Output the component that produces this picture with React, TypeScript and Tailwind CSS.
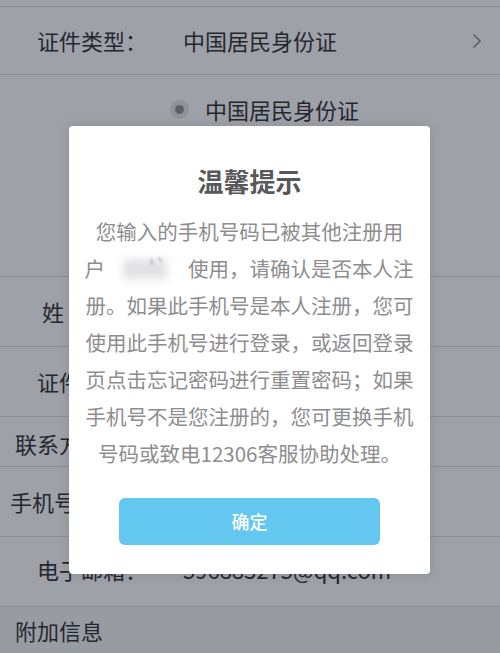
import React from 'react'

const font = { fontFamily: '"Noto Sans CJK SC", "Noto Sans", sans-serif' }

const Row: React.FC<{ className?: string; children?: React.ReactNode }> = ({ className = '', children }) => (
  <div className={`flex items-center bg-white border-b border-[#dcdcdc] ${className}`}>{children}</div>
)

const bodyLines = [
  '您输入的手机号码已被其他注册用',
  null,
  '册。如果此手机号是本人注册，您可',
  '使用此手机号进行登录，或返回登录',
  '页点击忘记密码进行重置密码；如果',
  '手机号不是您注册的，您可更换手机',
  '号码或致电12306客服协助处理。',
]

export default function App() {
  return (
    <div className="relative h-[653px] w-[500px] overflow-hidden bg-white text-[#222]" style={font}>
      {/* form underneath */}
      <div className="flex flex-col">
        <div className="h-[7px] bg-white border-b border-[#dcdcdc]" />
        <Row className="h-[68px] pl-[37px] pr-[18px] text-[22px]">
          <span className="w-[146px]">证件类型：</span>
          <span className="flex-1">中国居民身份证</span>
          <svg width="10" height="16" viewBox="0 0 10 16" className="text-[#888]">
            <path d="M1.5 1.5 L8 8 L1.5 14.5" fill="none" stroke="currentColor" strokeWidth="1.6" />
          </svg>
        </Row>
        <div className="h-[202px] bg-white border-b border-[#dcdcdc] pt-[22px]">
          <div className="flex items-center gap-[16px] pl-[170px] text-[22px] leading-[24px]">
            <span className="flex h-[19px] w-[19px] items-center justify-center rounded-full bg-[#e4e4e6]">
              <span className="h-[9px] w-[9px] rounded-full bg-[#888a90]" />
            </span>
            <span>中国居民身份证</span>
          </div>
        </div>
        <Row className="h-[70px] pl-[42px] text-[22px]">
          <span>姓　　名：</span>
        </Row>
        <Row className="h-[70px] pl-[37px] text-[22px]">
          <span>证件号码：</span>
        </Row>
        <Row className="h-[50px] bg-[#f4f4f5] pl-[15px] pt-[4px] text-[22px]">
          <span>联系方式</span>
        </Row>
        <Row className="h-[70px] pl-[10px] text-[22px]">
          <span>手机号码：</span>
        </Row>
        <Row className="h-[70px] pl-[37px] pb-[4px] text-[22px]">
          <span className="w-[146px]">电子邮箱：</span>
          <span>596883275@qq.com</span>
        </Row>
        <div className="flex h-[46px] items-center bg-[#f4f4f5] pl-[15px] text-[22px]">
          <span>附加信息</span>
        </div>
      </div>

      {/* mask */}
      <div className="absolute inset-0 bg-[#2a2f40]/45" />

      {/* dialog */}
      <div className="absolute left-[69px] top-[126px] flex h-[448px] w-[361px] flex-col items-center rounded-[4px] bg-white shadow-[0_0_12px_rgba(0,0,0,0.12)]">
        <div className="mt-[37px] text-[26px] font-bold leading-[36px] text-[#58585a]">温馨提示</div>
        <div className="mt-[14px] flex flex-col items-center text-[20.5px] leading-[37px] text-[#8d8d8f]">
          {bodyLines.map((line, i) =>
            line === null ? (
              <div key={i} className="flex w-[330px] items-center whitespace-nowrap">
                <span>户</span>
                <span className="relative inline-block h-[37px] w-[83px]">
                  <span className="absolute left-[18px] top-[9px] h-[20px] w-[44px] bg-[#e2e2e4] blur-[4px]" />
                  <span className="absolute left-[44px] top-[-2px] text-[#b0b0b4] blur-[0.8px]">'`</span>
                </span>
                <span>使用，请确认是否本人注</span>
              </div>
            ) : (
              <div key={i} className="whitespace-nowrap">
                {line}
              </div>
            )
          )}
        </div>
        <button className="mt-[26px] h-[47px] w-[261px] rounded-[6px] bg-[#63c7ef] text-[18px] font-medium text-white">
          确定
        </button>
      </div>
    </div>
  )
}
